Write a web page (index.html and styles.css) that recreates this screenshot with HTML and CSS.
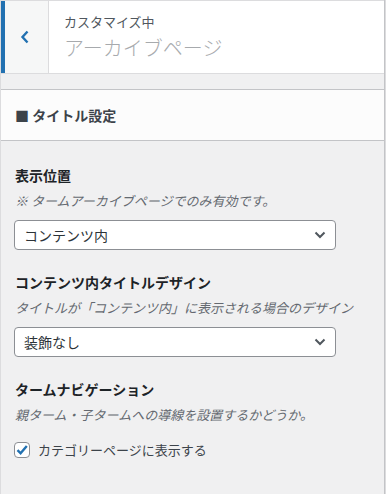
FILE: index.html
```html
<!DOCTYPE html>
<html lang="ja">
<head>
<meta charset="UTF-8">
<meta name="viewport" content="width=device-width, initial-scale=1.0">
<title>カスタマイズ中 - アーカイブページ</title>
<link rel="stylesheet" href="styles.css">
</head>
<body>

<div class="panel">
    <div class="panel-header">
        <button class="back-button" aria-label="戻る">
            <svg width="10" height="14" viewBox="0 0 10 14">
                <path d="M7.5 1.5 L2.5 7 L7.5 12.5" fill="none" stroke="#2271b1" stroke-width="2.4"/>
            </svg>
        </button>
        <div class="panel-title">
            <span class="panel-sub">カスタマイズ中</span>
            <span class="panel-name">アーカイブページ</span>
        </div>
    </div>

    <div class="spacer"></div>

    <h3 class="section-title">■ タイトル設定</h3>

    <div class="controls">
        <div class="control">
            <span class="control-title">表示位置</span>
            <span class="control-desc">※ タームアーカイブページでのみ有効です。</span>
            <div class="select-box">
                <span>コンテンツ内</span>
                <svg width="12" height="8" viewBox="0 0 12 8">
                    <path d="M1.5 1.5 L6 6 L10.5 1.5" fill="none" stroke="#50575e" stroke-width="2"/>
                </svg>
            </div>
        </div>

        <div class="control">
            <span class="control-title">コンテンツ内タイトルデザイン</span>
            <span class="control-desc">タイトルが「コンテンツ内」に表示される場合のデザイン</span>
            <div class="select-box">
                <span>装飾なし</span>
                <svg width="12" height="8" viewBox="0 0 12 8">
                    <path d="M1.5 1.5 L6 6 L10.5 1.5" fill="none" stroke="#50575e" stroke-width="2"/>
                </svg>
            </div>
        </div>

        <div class="control">
            <span class="control-title">タームナビゲーション</span>
            <span class="control-desc">親ターム・子タームへの導線を設置するかどうか。</span>
            <label class="check-row">
                <span class="checkbox">
                    <svg width="14" height="14" viewBox="0 0 14 14">
                        <path d="M2.5 7.2 L5.6 10.3 L11.8 3" fill="none" stroke="#2271b1" stroke-width="2.4"/>
                    </svg>
                </span>
                カテゴリーページに表示する
            </label>
        </div>
    </div>
</div>

</body>
</html>
```

FILE: styles.css
```css
body {
    font-family: "Noto Sans CJK JP", "Noto Sans", sans-serif;
    margin: 0;
    padding: 0;
    background-color: #dcdcde;
}
.panel {
    width: 383px;
    min-height: 494px;
    background-color: #f0f0f1;
    border-left: 1px solid #dcdcde;
    border-right: 1px solid #c3c4c7;
}
.panel-header {
    display: flex;
    height: 72px;
    background-color: #fff;
    border-top: 1px solid #dcdcde;
    border-bottom: 1px solid #dcdcde;
}
.back-button {
    width: 48px;
    padding: 0 4px 0 0;
    border: none;
    border-left: 4px solid #2271b1;
    border-right: 1px solid #dcdcde;
    background-color: #f6f7f7;
    display: flex;
    align-items: center;
    justify-content: center;
}
.panel-title {
    display: flex;
    flex-direction: column;
    padding: 12px 0 0 15px;
}
.panel-sub {
    font-size: 13px;
    line-height: 18px;
    color: #50575e;
}
.panel-name {
    font-size: 20px;
    line-height: 28px;
    margin-top: 3px;
    color: #a7aaad;
    font-weight: 300;
}
.spacer {
    height: 15px;
    border-bottom: 1px solid #c3c4c7;
}
.section-title {
    margin: 0;
    height: 50px;
    line-height: 50px;
    padding-left: 14px;
    font-size: 14px;
    font-weight: bold;
    color: #3c434a;
    background-color: #fcfcfc;
    border-bottom: 1px solid #c3c4c7;
}
.controls {
    padding: 24px 0 0 13px;
}
.control {
    display: flex;
    flex-direction: column;
    margin-bottom: 22px;
}
.control-title {
    font-size: 14px;
    line-height: 20px;
    font-weight: bold;
    color: #1d2327;
    padding-left: 1px;
}
.control-desc {
    font-size: 13px;
    line-height: 18px;
    font-style: italic;
    color: #646970;
    margin: 7px 0 10px;
    padding-left: 1px;
}
.select-box {
    width: 302px;
    height: 28px;
    display: flex;
    align-items: center;
    justify-content: space-between;
    padding: 0 9px 0 9px;
    background-color: #fff;
    border: 1px solid #8c8f94;
    border-radius: 4px;
    font-size: 14px;
    color: #2c3338;
}
.check-row {
    display: flex;
    align-items: center;
    gap: 8px;
    margin-top: 6px;
    font-size: 13px;
    color: #3c434a;
}
.checkbox {
    width: 14px;
    height: 14px;
    display: flex;
    align-items: center;
    justify-content: center;
    background-color: #fff;
    border: 1px solid #8c8f94;
    border-radius: 4px;
}
```
